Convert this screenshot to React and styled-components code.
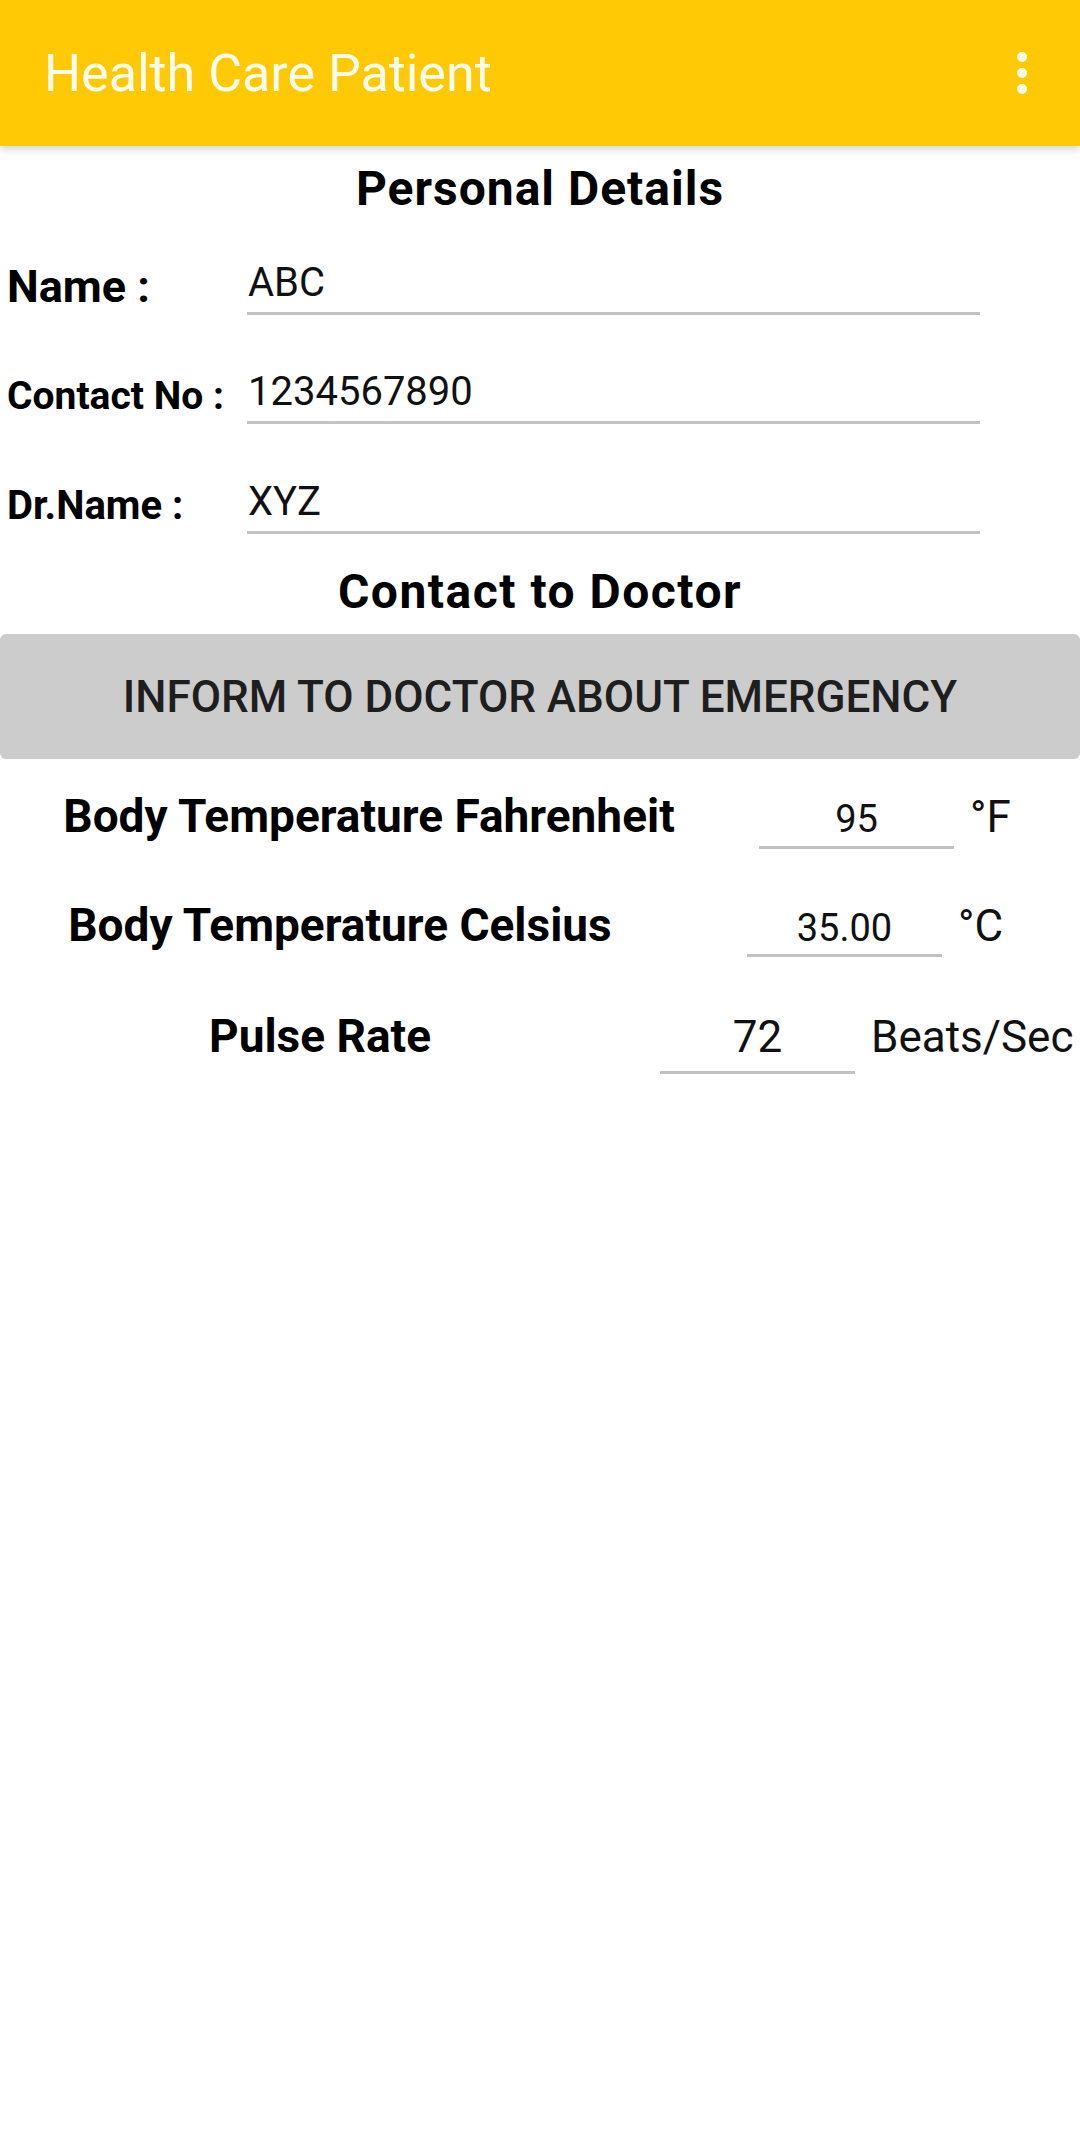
import React from "react";
import styled, { createGlobalStyle } from "styled-components";

const Global = createGlobalStyle`
  html, body { margin: 0; padding: 0; background: #ffffff; }
  body { font-family: Roboto, "Noto Sans", sans-serif; color: #000; }
  * { box-sizing: border-box; }
`;

const Page = styled.div`
  width: 1080px;
  min-height: 2131px;
  background: #fff;
`;

const AppBar = styled.header`
  height: 146px;
  background: #ffc905;
  box-shadow: 0 3px 8px rgba(0, 0, 0, 0.18);
  display: flex;
  align-items: center;
  justify-content: space-between;
  padding: 0 53px 0 44px;
  position: relative;
  z-index: 1;
`;

const Title = styled.h1`
  margin: 0;
  font-size: 52px;
  font-weight: 400;
  color: #fffdf2;
`;

const Kebab = styled.div`
  display: flex;
  flex-direction: column;
  gap: 6px;
`;

const Dot = styled.span`
  width: 10px;
  height: 10px;
  border-radius: 50%;
  background: #fffbea;
`;

const Heading = styled.h2`
  margin: ${(p) => p.$top}px 0 0;
  text-align: center;
  font-size: 48px;
  line-height: 56px;
  letter-spacing: ${(p) => p.$spacing}px;
  font-weight: 700;
  color: #000;
`;

const DetailRow = styled.div`
  display: flex;
  align-items: flex-end;
  margin-top: ${(p) => p.$top}px;
`;

const DetailLabel = styled.div`
  width: 247px;
  padding-left: 7px;
  font-size: ${(p) => p.$size}px;
  line-height: 56px;
  font-weight: 700;
  white-space: nowrap;
`;

const DetailValue = styled.div`
  width: 733px;
  font-size: 40px;
  line-height: 48px;
  padding: 0 0 5px 1px;
  border-bottom: 3px solid #c2c2c2;
  color: #111;
`;

const EmergencyButton = styled.button`
  display: block;
  width: 100%;
  height: 125px;
  margin-top: 14px;
  border: none;
  border-radius: 6px;
  background: #cccccc;
  color: #1e1e1e;
  font-family: Roboto, "Noto Sans", sans-serif;
  font-size: 44px;
  font-weight: 500;
  padding: 0;
`;

const VitalRow = styled.div`
  display: flex;
  align-items: baseline;
  margin-top: ${(p) => p.$top}px;
`;

const VitalLabel = styled.div`
  width: ${(p) => p.$width}px;
  text-align: center;
  font-size: 46px;
  line-height: 56px;
  font-weight: 700;
  white-space: nowrap;
`;

const VitalField = styled.div`
  width: 195px;
  margin-left: ${(p) => p.$gap}px;
  text-align: center;
  font-size: ${(p) => p.$size}px;
  line-height: 1.2;
  padding-bottom: ${(p) => (p.$size < 40 ? 3 : 7)}px;
  border-bottom: 3px solid #c2c2c2;
  color: #111;
`;

const Unit = styled.div`
  margin-left: 16px;
  font-size: 44px;
  line-height: 56px;
  color: #111;
  white-space: nowrap;
`;

const personal = [
  { label: "Name :", size: 45, value: "ABC", top: 42 },
  { label: "Contact No :", size: 39, value: "1234567890", top: 53 },
  { label: "Dr.Name :", size: 40, value: "XYZ", top: 54 },
];

const vitals = [
  { label: "Body Temperature Fahrenheit", width: 738, gap: 21, value: "95", size: 38, unit: "°F", top: 29 },
  { label: "Body Temperature Celsius", width: 680, gap: 67, value: "35.00", size: 38, unit: "°C", top: 48 },
  { label: "Pulse Rate", width: 640, gap: 20, value: "72", size: 44, unit: "Beats/Sec", top: 51 },
];

export default function App() {
  return (
    <Page>
      <Global />
      <AppBar>
        <Title>Health Care Patient</Title>
        <Kebab>
          <Dot />
          <Dot />
          <Dot />
        </Kebab>
      </AppBar>
      <Heading $top={15} $spacing={1}>Personal Details</Heading>
      {personal.map((r) => (
        <DetailRow key={r.label} $top={r.top}>
          <DetailLabel $size={r.size}>{r.label}</DetailLabel>
          <DetailValue>{r.value}</DetailValue>
        </DetailRow>
      ))}
      <Heading $top={30} $spacing={1.5}>Contact to Doctor</Heading>
      <EmergencyButton>INFORM TO DOCTOR ABOUT EMERGENCY</EmergencyButton>
      {vitals.map((v) => (
        <VitalRow key={v.label} $top={v.top}>
          <VitalLabel $width={v.width}>{v.label}</VitalLabel>
          <VitalField $gap={v.gap} $size={v.size}>{v.value}</VitalField>
          <Unit>{v.unit}</Unit>
        </VitalRow>
      ))}
    </Page>
  );
}
